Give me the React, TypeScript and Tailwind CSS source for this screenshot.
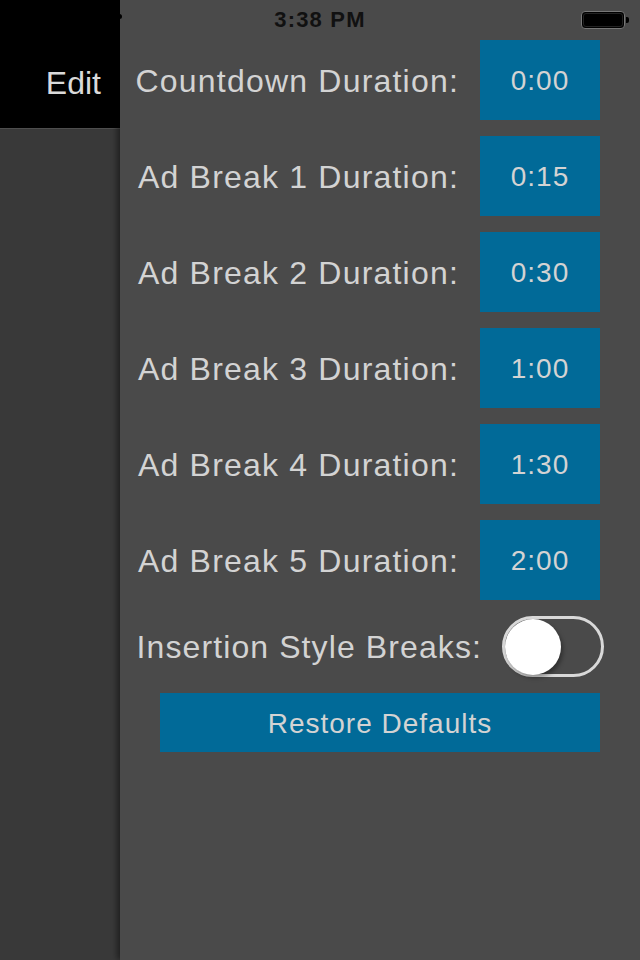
import { useState } from "react";

const BREAKS = [
  { label: "Countdown Duration:", value: "0:00" },
  { label: "Ad Break 1 Duration:", value: "0:15" },
  { label: "Ad Break 2 Duration:", value: "0:30" },
  { label: "Ad Break 3 Duration:", value: "1:00" },
  { label: "Ad Break 4 Duration:", value: "1:30" },
  { label: "Ad Break 5 Duration:", value: "2:00" },
];

const FONT = "font-['Liberation_Sans',Arial,sans-serif]";

function StatusBar() {
  return (
    <div className="pointer-events-none absolute inset-x-0 top-0 flex h-10 items-center justify-center">
      <span className="absolute left-[116px] top-[14px] h-[5px] w-[6px] rounded-full bg-black" />
      <span className="text-[22px] font-semibold leading-none tracking-[1.2px] text-[#111]">3:38 PM</span>
      <div className="absolute right-[11px] top-[11px] flex items-center">
        <div className="h-[18px] w-[44px] rounded-[4px] border border-[#777] bg-black p-[1px]">
          <div className="h-full w-full rounded-[3px] border border-[#222] bg-black" />
        </div>
        <div className="ml-[1px] h-[6px] w-[3px] rounded-r-[2px] bg-black" />
      </div>
    </div>
  );
}

function Toggle({ on, onChange }: { on: boolean; onChange: (next: boolean) => void }) {
  return (
    <button
      onClick={() => onChange(!on)}
      className={`relative flex h-[61px] w-[102px] shrink-0 items-center rounded-full border-[3px] border-[#d9d9d9] p-0 ${
        on ? "bg-[#4cd964]" : "bg-transparent"
      }`}
    >
      <span
        className={`block h-[56px] w-[56px] rounded-full bg-white shadow-[2px_3px_4px_rgba(0,0,0,0.35)] ${
          on ? "ml-[40px]" : "ml-0"
        }`}
      />
    </button>
  );
}

export default function App() {
  const [insertion, setInsertion] = useState(false);

  return (
    <div className={`relative flex h-[960px] w-[640px] overflow-hidden bg-[#393939] ${FONT}`}>
      <aside className="flex w-[120px] shrink-0 flex-col">
        <div className="flex h-[128px] items-end justify-end bg-black pb-[29px] pr-[19px]">
          <span className="text-[32px] leading-none text-[#dadada]">Edit</span>
        </div>
        <div className="h-px bg-[#4e4e4e]" />
        <div className="flex-1 bg-[#393939]" />
      </aside>

      <main className="flex flex-1 flex-col gap-4 bg-[#4a4a4a] pt-10 shadow-[-3px_0_6px_rgba(0,0,0,0.45)]">
        {BREAKS.map((item) => (
          <div key={item.label} className="flex h-20 items-center justify-end gap-[21px] pr-10">
            <span className="pt-[2px] text-[32px] leading-none tracking-[1.2px] text-[#d3d3d3]">{item.label}</span>
            <div className="flex h-20 w-[120px] items-center justify-center bg-[#016a98]">
              <span className="pt-[2px] text-[28px] leading-none tracking-[1px] text-[#d3d3d3]">{item.value}</span>
            </div>
          </div>
        ))}

        <div className="flex items-center justify-end gap-5 pr-9">
          <span className="text-[32px] leading-none tracking-[1.1px] text-[#d3d3d3]">Insertion Style Breaks:</span>
          <Toggle on={insertion} onChange={setInsertion} />
        </div>

        <div className="px-10">
          <button className="flex h-[59px] w-full items-center justify-center bg-[#016a98]">
            <span className="pt-[3px] text-[28px] leading-none tracking-[1px] text-[#d3d3d3]">Restore Defaults</span>
          </button>
        </div>
      </main>

      <StatusBar />
    </div>
  );
}
